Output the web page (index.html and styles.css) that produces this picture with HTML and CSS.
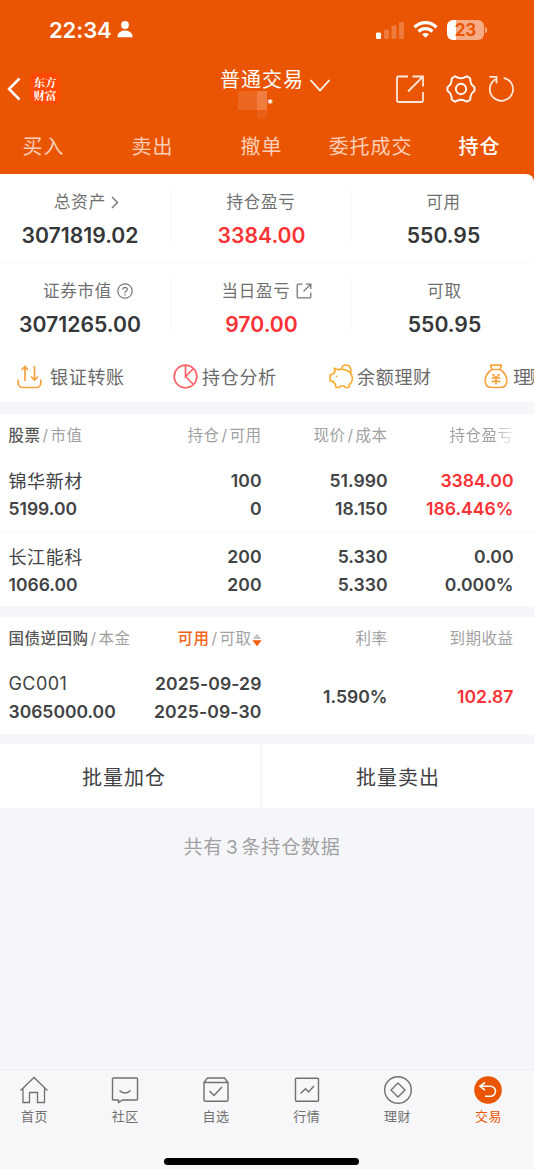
FILE: index.html
```
<!DOCTYPE html>
<html lang="zh-CN">
<head>
<meta charset="utf-8">
<title>持仓</title>
<link rel="stylesheet" href="styles.css">
</head>
<body>
<div class="app">
  <header class="header">
    <div class="status">
      <span class="time">22:34</span>
      <svg class="person" width="16" height="17" viewBox="0 0 16 17" fill="#fff"><circle cx="8" cy="4" r="3.9"/><path d="M.5 16.2C.4 11.800 4 9.600 8 9.600s7.600 2.200 7.500 6.600z"/></svg>
      <span class="grow"></span>
      <svg class="signal" width="29" height="19" viewBox="0 0 29 19" fill="#fff"><rect x="0" y="11.500" width="5" height="6.500" rx="1.300"/><g opacity=".22"><rect x="8" y="8.500" width="5" height="9.500" rx="1.300"/><rect x="15.500" y="4.500" width="5" height="13.500" rx="1.300"/><rect x="23" y="1" width="5" height="17" rx="1.300"/></g></svg>
      <svg class="wifi" width="25" height="19" viewBox="0 0 25 19" fill="none" stroke="#fff" stroke-width="3.300"><path d="M1.500 7.200C7.800 1 17.200 1 23.500 7.200"/><path d="M5.600 11.500c4-3.800 9.800-3.800 13.800 0"/><path d="M12.500 17.800L9 14.300c2-1.800 5-1.800 7 0z" fill="#fff" stroke="none"/></svg>
      <span class="battery">23</span><span class="battery-cap"></span>
    </div>
    <div class="nav">
      <svg class="back" width="14" height="24" viewBox="0 0 14 24" fill="none" stroke="#fff" stroke-width="2.500"><path d="M12.500 1.500L2 12l10.500 10.500"/></svg>
      <div class="logo">东方财富</div>
      <div class="account">
        <div class="account-name">普通交易</div>
        <div class="account-id"><i class="mask m1"></i><i class="mask m2"></i><b>*</b></div>
      </div>
      <svg class="down" width="22" height="16" viewBox="0 0 22 16" fill="none" stroke="#fff" stroke-width="1.800"><path d="M1.500 2L11 12.500 20.500 2"/></svg>
      <svg class="share" width="30" height="30" viewBox="0 0 30 30" fill="none" stroke="#ffe9dc" stroke-width="1.800"><path d="M13 2.500H3.500a1.500 1.500 0 0 0-1.500 1.500V26.500a1.500 1.500 0 0 0 1.500 1.500h23a1.500 1.500 0 0 0 1.500-1.500V18M17.500 2.500H28v10M28 2.500L13 17.500"/></svg>
      <svg class="gear" width="30" height="30" viewBox="0 0 30 30" fill="none" stroke="#fff" stroke-width="1.900"><path d="M9.200 2.300L12 3.600Q15 4.800 18 3.600L20.800 2.300L24.200 4.300L24.500 7.400Q25 10.500 27.400 12.300L28.500 13.200V16.800L27.400 17.700Q25 19.500 24.500 22.600L24.200 25.700L20.800 27.700L18 26.400Q15 25.200 12 26.400L9.200 27.700L5.800 25.700L5.500 22.600Q5 19.500 2.600 17.700L1.500 16.800V13.200L2.600 12.300Q5 10.500 5.500 7.400L5.800 4.300Z" stroke-linejoin="round"/><circle cx="15" cy="15" r="5.200"/></svg>
      <svg class="refresh" width="28" height="28" viewBox="0 0 28 28" fill="none" stroke="#ffe9dc" stroke-width="1.700"><path d="M16.700 3.800A11.600 11.600 0 1 1 8.500 5.200M2.500 2.800H9.500V9.500"/></svg>
    </div>
    <nav class="tabs"><span>买入</span><span>卖出</span><span>撤单</span><span>委托成交</span><span class="on">持仓</span></nav>
  </header>

  <section class="summary">
    <div class="stats">
      <div class="stat"><div class="label arrow">总资产<svg width="8" height="13" viewBox="0 0 8 13" fill="none" stroke="#707070" stroke-width="1.400"><path d="M1 1l5.500 5.500L1 12"/></svg></div><div class="value">3071819.02</div></div>
      <div class="stat"><div class="label">持仓盈亏</div><div class="value red">3384.00</div></div>
      <div class="stat"><div class="label">可用</div><div class="value">550.95</div></div>
    </div>
    <div class="stats second">
      <div class="stat"><div class="label help">证券市值<svg width="16" height="16" viewBox="0 0 16 16" fill="none" stroke="#777" stroke-width="1.200"><circle cx="8" cy="8" r="7.200"/><path d="M5.800 6.500c0-3 4.500-2.900 4.500-.1C10.300 8 8 8 8 9.900M8 11v1.500"/></svg></div><div class="value">3071265.00</div></div>
      <div class="stat"><div class="label open">当日盈亏<svg width="16" height="16" viewBox="0 0 16 16" fill="none" stroke="#777" stroke-width="1.300"><path d="M6.500 1.200H2.200Q1.200 1.200 1.200 2.200V13.800Q1.200 14.800 2.200 14.800H13.800Q14.800 14.800 14.800 13.800V9.500M9.800 1.200H14.800V6M14.500 1.500L7.500 8.500"/></svg></div><div class="value red">970.00</div></div>
      <div class="stat last"><div class="label">可取</div><div class="value">550.95</div></div>
    </div>
    <div class="quick">
      <div class="quick-item q1"><svg width="25" height="24" viewBox="0 0 25 24" fill="none" stroke="#f5a140" stroke-width="1.700"><path d="M1.200 14.500v3.500a4.500 4.500 0 0 0 4.500 4.500h13.600a4.500 4.500 0 0 0 4.500-4.500v-3.500M8 16V2M4.500 5L8 1.500 11 5M17.500 1v14M14 11.500l3.500 3.500 3.500-3.500"/></svg><span>银证转账</span></div>
      <div class="quick-item q2"><svg width="25" height="25" viewBox="0 0 25 25" fill="none" stroke="#ff6268" stroke-width="1.700"><circle cx="12.500" cy="12.500" r="11.300"/><path d="M12.500 1.200V12.500L20.500 4.500M12.500 12.500L20.500 20.500"/></svg><span>持仓分析</span></div>
      <div class="quick-item q3"><svg width="25" height="25" viewBox="0 0 25 25" fill="none" stroke="#f9ad2f" stroke-width="1.700" stroke-linejoin="round"><path d="M6 8L5.300 4.200 9.200 5.700Q12 4.700 15.200 5.700 21.800 7 23.300 13 24 17.500 20.500 20.500L19.800 23.500H16.500L15 22H11.500L10.500 23.500H7L6.200 20Q4.500 18 3.200 17H1.200V10.800Q4 10.400 6 8zM12.500 5C12.800 2 15 1 17 1 20.500 1 22.500 3.500 21.800 8.800"/><circle cx="7.600" cy="12.300" r=".9" fill="#f9ad2f" stroke="none"/></svg><span>余额理财</span></div>
      <div class="quick-item q4"><svg width="24" height="25" viewBox="0 0 24 25" fill="none" stroke="#f9a33f" stroke-width="1.700" stroke-linejoin="round"><path d="M8 5.500L6.500 1.200H17.500L16 5.500zM8 5.500C4 8 1.200 12 1.200 17c0 4.500 2 6.500 6.800 6.500h8c4.800 0 6.800-2 6.800-6.500 0-5-2.800-9-6.800-11.500M8.500 10l3.500 4 3.500-4M12 14v6.500M7.500 14h9M7.500 17.300h9"/></svg><span>理财</span></div>
    </div>
  </section>

  <section class="card">
    <div class="row head">
      <div><b>股票</b><i>/</i>市值</div><div>持仓<i>/</i>可用</div><div>现价<i>/</i>成本</div><div class="fade">持仓盈亏</div>
    </div>
    <div class="row item">
      <div><p class="name">锦华新材</p><p>5199.00</p></div><div><p>100</p><p>0</p></div><div><p>51.990</p><p>18.150</p></div><div class="red"><p>3384.00</p><p>186.446%</p></div>
    </div>
    <div class="row item line">
      <div><p class="name">长江能科</p><p>1066.00</p></div><div><p>200</p><p>200</p></div><div><p>5.330</p><p>5.330</p></div><div><p>0.00</p><p>0.000%</p></div>
    </div>
  </section>

  <section class="card repo">
    <div class="row head">
      <div><b>国债逆回购</b><i>/</i>本金</div><div class="sorted"><em>可用</em><i>/</i>可取<svg width="10" height="14" viewBox="0 0 10 14"><path d="M.5 6L5 .8 9.500 6z" fill="#c4c4c4"/><path d="M.3 7.300h9.400L5 13.300z" fill="#f45d10"/></svg></div><div>利率</div><div>到期收益</div>
    </div>
    <div class="row item">
      <div><p class="name code">GC001</p><p>3065000.00</p></div><div><p>2025-09-29</p><p>2025-09-30</p></div><div>1.590%</div><div class="red">102.87</div>
    </div>
  </section>

  <div class="batch"><span>批量加仓</span><span>批量卖出</span></div>
  <div class="total">共有<span>3</span>条持仓数据</div>

  <footer class="tabbar">
    <div class="tab"><svg width="30" height="28" viewBox="0 0 30 28" fill="none" stroke="#707070" stroke-width="1.300"><path d="M1.500 14.500L15 1.500l13.500 13M4 12.500v14h6.500v-10h8v10H25.500v-14"/></svg><span>首页</span></div>
    <div class="tab"><svg width="30" height="28" viewBox="0 0 30 28" fill="none" stroke="#707070" stroke-width="1.400"><path d="M3.500 2h23q1 0 1 1v20q0 1-1 1H12.500L8.500 26.500V24h-5q-1 0-1-1V3q0-1 1-1zM9.500 14.500q5.500 5.200 11 0"/></svg><span>社区</span></div>
    <div class="tab"><svg width="30" height="28" viewBox="0 0 30 28" fill="none" stroke="#707070" stroke-width="1.400"><path d="M3 6.500L6.500 2h17L27 6.500v17.500q0 1.200-1.200 1.200H4.200Q3 25.200 3 24V6.500H27M8.500 15l4.500 4.500 8-8.500"/></svg><span>自选</span></div>
    <div class="tab"><svg width="30" height="28" viewBox="0 0 30 28" fill="none" stroke="#707070" stroke-width="1.400"><rect x="3.500" y="2.200" width="23" height="23" rx="1"/><path d="M8.500 17.500l5-4.800 3 3.300L22 10"/></svg><span>行情</span></div>
    <div class="tab"><svg width="30" height="28" viewBox="0 0 30 28" fill="none" stroke="#707070" stroke-width="1.400"><circle cx="15" cy="14" r="13.300"/><path d="M15 7l7 7-7 7-7-7z" stroke-linejoin="round"/></svg><span>理财</span></div>
    <div class="tab active"><svg width="30" height="28" viewBox="0 0 30 28" fill="none" stroke="#fff" stroke-width="1.600"><circle cx="15" cy="14" r="13.800" fill="#ea5504" stroke="none"/><path d="M12 6.500L7 10.300l5 3.800M7 10.300h10.500a5 5 0 0 1 0 10h-5.500"/></svg><span>交易</span></div>
    <div class="home"></div>
  </footer>
</div>
</body>
</html>
```
FILE: styles.css
```
* { box-sizing: border-box; }
body { margin: 0; background: #fff; font-family: Inter, "Noto Sans CJK SC", sans-serif; color: #3c3d3f; }
svg { display: block; flex: none; }
p { margin: 0; }
i, em { font-style: normal; }
.app { width: 534px; height: 1169px; background: #f5f6f9; display: flex; flex-direction: column; overflow: hidden; }
.red { color: #f93236 !important; }

.header { height: 174px; background: #ea5504; color: #fff; flex: none; }
.status { height: 60px; padding: 0 47px 0 49px; display: flex; align-items: center; }
.time { font-size: 22px; font-weight: 600; line-height: 60px; width: 68px; letter-spacing: -.1px; }
.person { margin-bottom: 1px; }
.grow { flex: 1; }
.signal { margin-right: 8px; }
.wifi { margin-right: 9px; margin-bottom: 2px; }
.battery { width: 37px; height: 20px; margin-bottom: 1px; border-radius: 6px; background: linear-gradient(90deg, #fff 9px, #f5ac85 9px); color: #ea5504; font-size: 17px; font-weight: 700; line-height: 20px; text-align: center; }
.battery-cap { width: 2px; height: 6px; margin: 0 0 1px 1px; border-radius: 0 2px 2px 0; background: #f5ac85; }
.nav { height: 60px; display: flex; padding-left: 7px; }
.back { margin-top: 17px; }
.logo { width: 30px; height: 31px; margin: 13px 0 0 9px; padding: 3px 3px 0 3.500px; border-radius: 6px; background: #ff4800; font: 700 11.500px/12.500px "Noto Serif CJK SC", "Noto Sans CJK SC", serif; }
.account { width: 84px; margin-left: 160px; }
.account-name { font-size: 20px; letter-spacing: 1px; line-height: 30px; margin-top: 5px; height: 26px; white-space: nowrap; }
.account-id { display: flex; height: 27px; margin-left: 18px; }
.mask { height: 19px; background: #eb661f; }
.m1 { width: 19px; }
.m2 { width: 10px; height: 27px; background: linear-gradient(#f07c3e 19px, #ea5f14 19px); }
.account-id b { font-size: 12px; line-height: 26px; font-weight: 600; }
.down { margin: 18px 0 0 5px; }
.share { margin: 14px 0 0 64px; }
.gear { margin: 14px 0 0 21px; }
.refresh { margin: 14px 0 0 11px; }
.tabs { display: grid; grid-template-columns: repeat(5, 109px); margin-left: -11px; height: 54px; }
.tabs span { display: flex; flex-direction: column; align-items: center; font-size: 20px; line-height: 54px; letter-spacing: .9px; color: #fbcfb7; }
.tabs .on { color: #fff; font-weight: 500; }
.tabs .on::after { content: ""; width: 26px; height: 4px; border-radius: 2px; background: #fff; margin-top: -7px; }

.summary { height: 228px; background: #fff; border-top-right-radius: 8px; box-shadow: 8px -8px 0 #ea5504; clip-path: inset(-8px 0 0 0); flex: none; overflow: hidden; }
.stats { display: grid; grid-template-columns: 171px 181px 182px; height: 89px; padding-top: 14px; border-bottom: 1px solid #f8f8fa; }
.stats.second { height: 87px; border: 0; }
.stat { display: flex; flex-direction: column; align-items: center; border-right: 1px solid #f9f9fa; height: 54px; }
.stat:first-child { padding-right: 10px; }
.stat:nth-child(2) .value { padding-left: 1px; }
.stat:last-child { border: 0; padding-left: 1px; }
.stat.last { padding-left: 3px; }
.label { display: flex; align-items: center; font-size: 16.500px; line-height: 28px; height: 28px; letter-spacing: .8px; color: #707070; }
.arrow { padding-left: 13px; }
.help { padding-left: 16px; }
.open { padding-left: 11px; }
.label svg { margin-left: 5px; }
.value { font-size: 21.200px; font-weight: 600; line-height: 26px; margin-top: 6px; color: #363739; }
.quick { height: 52px; padding-left: 17px; display: flex; white-space: nowrap; }
.quick-item { display: flex; align-items: center; font-size: 18px; letter-spacing: .7px; color: #696969; flex: none; height: 53px; }
.quick-item span { line-height: 26px; margin-top: 2px; }
.q1 { width: 156px; gap: 8px; }
.q2 { width: 156px; gap: 4px; }
.q3 { width: 155px; gap: 3px; }
.q4 { gap: 5px; letter-spacing: -1.500px; }

.card { margin-top: 12px; background: #fff; height: 192px; flex: none; }
.row { display: grid; grid-template-columns: 130px 123px 126px 126px; padding-left: 8.500px; text-align: right; }
.row > :first-child { text-align: left; }
.head { font-size: 15.500px; line-height: 44px; height: 42px; color: #a1a1a1; letter-spacing: .5px; white-space: nowrap; }
.head b { font-weight: 500; color: #555; }
.head i { margin: 0 2px; }
.head em { color: #f2651b; font-weight: 500; }
.fade { -webkit-mask-image: linear-gradient(90deg, #000 105px, transparent 130px); mask-image: linear-gradient(90deg, #000 105px, transparent 130px); }
.item { height: 75px; padding-top: 11px; font-size: 17.600px; font-weight: 600; line-height: 27.500px; color: #424345; }
.item > :first-child { font-size: 17.500px; }
.item .name { font-weight: 400; font-size: 18px; letter-spacing: .6px; padding-top: 1px; height: 27.500px; }
.item .code { letter-spacing: .4px; padding: 0; }
.line { border-top: 1px solid #f5f6f8; }
.repo { height: 117px; margin-top: 11px; }
.sorted { display: flex; align-items: center; justify-content: flex-end; }
.sorted svg { margin-top: 1px; }
.repo .item > :nth-child(2) { letter-spacing: .1px; }
.repo .item > :nth-child(n+3) { line-height: 53px; }
.batch { display: grid; grid-template-columns: 262px 272px; height: 64px; margin-top: 10px; background: #fff; font-size: 20px; line-height: 68px; letter-spacing: 1px; text-align: center; color: #404143; flex: none; }
.batch span { height: 64px; }
.batch span:first-child { border-right: 2px solid #f6f7f9; padding-right: 12px; }
.total { text-align: center; font-size: 19px; line-height: 40px; margin-top: 20px; letter-spacing: .8px; color: #a1a1a1; padding-right: 10px; }
.total span { margin: 0 3px; }

.tabbar { position: relative; margin-top: auto; height: 100px; border-top: 1px solid #eceef1; background: #f7f7f9; display: grid; grid-template-columns: repeat(6, 90.800px); margin-left: -11px; padding-top: 6px; flex: none; }
.tab { display: flex; flex-direction: column; align-items: center; font-size: 13px; line-height: 22px; letter-spacing: .5px; color: #707070; }
.tab span { margin-top: 1px; }
.active { color: #ea5504; }
.home { position: absolute; left: 175px; top: 88px; width: 195px; height: 7px; border-radius: 4px; background: #000; }
```
